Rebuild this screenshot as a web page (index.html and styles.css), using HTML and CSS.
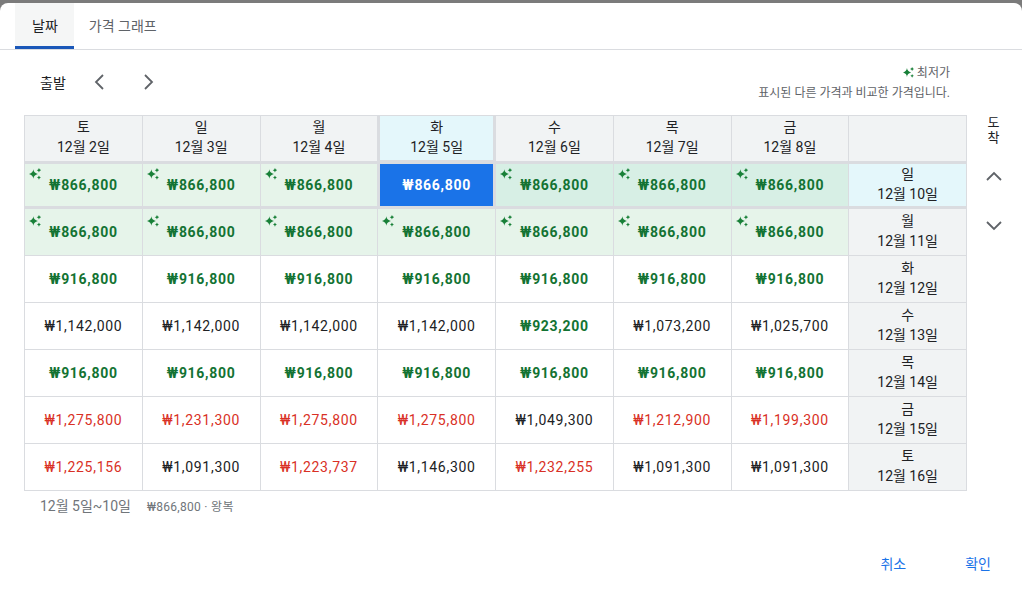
FILE: index.html
```html
<!DOCTYPE html>
<html lang="ko">
<head>
<meta charset="utf-8">
<link rel="stylesheet" href="styles.css">
</head>
<body>
<svg width="0" height="0" class="defs">
  <defs>
    <symbol id="spark" viewBox="0 0 10 10">
      <path d="M3.6 1 Q3.9 4.1 7.4 5 Q3.9 5.9 3.6 9 Q3.3 5.9 -0.2 5 Q3.3 4.1 3.6 1Z"/>
      <path d="M8.3 -0.1 Q8.5 1.4 10.2 1.8 Q8.5 2.2 8.3 3.7 Q8.1 2.2 6.4 1.8 Q8.1 1.4 8.3 -0.1Z"/>
      <path d="M8.3 6.3 Q8.5 7.6 9.9 8 Q8.5 8.4 8.3 9.7 Q8.1 8.4 6.7 8 Q8.1 7.6 8.3 6.3Z"/>
    </symbol>
  </defs>
</svg>
<div class="dialog">
  <div class="tabs">
    <div class="tab active">날짜</div>
    <div class="tab">가격 그래프</div>
  </div>
  <div class="content">
    <div class="toprow">
      <div class="depart">
        <span class="label">출발</span>
        <span class="chev"><svg viewBox="0 0 24 24"><path d="M15 5 L8 12 L15 19" /></svg></span>
        <span class="chev"><svg viewBox="0 0 24 24"><path d="M9 5 L16 12 L9 19" /></svg></span>
      </div>
      <div class="legend">
        <div class="legend-1"><svg class="spark-sm"><use href="#spark"/></svg> 최저가</div>
        <div class="legend-2">표시된 다른 가격과 비교한 가격입니다.</div>
      </div>
    </div>
    <div class="tablerow">
      <div class="grid">
        <div class="cell head"><span>토</span><span>12월 2일</span></div>
        <div class="cell head"><span>일</span><span>12월 3일</span></div>
        <div class="cell head"><span>월</span><span>12월 4일</span></div>
        <div class="cell head selhead"><span>화</span><span>12월 5일</span></div>
        <div class="cell head"><span>수</span><span>12월 6일</span></div>
        <div class="cell head"><span>목</span><span>12월 7일</span></div>
        <div class="cell head"><span>금</span><span>12월 8일</span></div>
        <div class="cell head"></div>

        <div class="cell low selrow"><svg class="spark"><use href="#spark"/></svg>₩866,800</div>
        <div class="cell low selrow"><svg class="spark"><use href="#spark"/></svg>₩866,800</div>
        <div class="cell low selrow"><svg class="spark"><use href="#spark"/></svg>₩866,800</div>
        <div class="cell selected">₩866,800</div>
        <div class="cell low selrow range"><svg class="spark"><use href="#spark"/></svg>₩866,800</div>
        <div class="cell low selrow range"><svg class="spark"><use href="#spark"/></svg>₩866,800</div>
        <div class="cell low selrow range"><svg class="spark"><use href="#spark"/></svg>₩866,800</div>
        <div class="cell side selrow selside"><span>일</span><span>12월 10일</span></div>

        <div class="cell low"><svg class="spark"><use href="#spark"/></svg>₩866,800</div>
        <div class="cell low"><svg class="spark"><use href="#spark"/></svg>₩866,800</div>
        <div class="cell low"><svg class="spark"><use href="#spark"/></svg>₩866,800</div>
        <div class="cell low"><svg class="spark"><use href="#spark"/></svg>₩866,800</div>
        <div class="cell low"><svg class="spark"><use href="#spark"/></svg>₩866,800</div>
        <div class="cell low"><svg class="spark"><use href="#spark"/></svg>₩866,800</div>
        <div class="cell low"><svg class="spark"><use href="#spark"/></svg>₩866,800</div>
        <div class="cell side"><span>월</span><span>12월 11일</span></div>

        <div class="cell green">₩916,800</div>
        <div class="cell green">₩916,800</div>
        <div class="cell green">₩916,800</div>
        <div class="cell green">₩916,800</div>
        <div class="cell green">₩916,800</div>
        <div class="cell green">₩916,800</div>
        <div class="cell green">₩916,800</div>
        <div class="cell side"><span>화</span><span>12월 12일</span></div>

        <div class="cell">₩1,142,000</div>
        <div class="cell">₩1,142,000</div>
        <div class="cell">₩1,142,000</div>
        <div class="cell">₩1,142,000</div>
        <div class="cell green">₩923,200</div>
        <div class="cell">₩1,073,200</div>
        <div class="cell">₩1,025,700</div>
        <div class="cell side"><span>수</span><span>12월 13일</span></div>

        <div class="cell green">₩916,800</div>
        <div class="cell green">₩916,800</div>
        <div class="cell green">₩916,800</div>
        <div class="cell green">₩916,800</div>
        <div class="cell green">₩916,800</div>
        <div class="cell green">₩916,800</div>
        <div class="cell green">₩916,800</div>
        <div class="cell side"><span>목</span><span>12월 14일</span></div>

        <div class="cell red">₩1,275,800</div>
        <div class="cell red">₩1,231,300</div>
        <div class="cell red">₩1,275,800</div>
        <div class="cell red">₩1,275,800</div>
        <div class="cell">₩1,049,300</div>
        <div class="cell red">₩1,212,900</div>
        <div class="cell red">₩1,199,300</div>
        <div class="cell side"><span>금</span><span>12월 15일</span></div>

        <div class="cell red">₩1,225,156</div>
        <div class="cell">₩1,091,300</div>
        <div class="cell red">₩1,223,737</div>
        <div class="cell">₩1,146,300</div>
        <div class="cell red">₩1,232,255</div>
        <div class="cell">₩1,091,300</div>
        <div class="cell">₩1,091,300</div>
        <div class="cell side"><span>토</span><span>12월 16일</span></div>
      </div>
      <div class="arrive">
        <div class="arrive-label">도<br>착</div>
        <span class="chev v"><svg viewBox="0 0 24 24"><path d="M5 15 L12 8 L19 15" /></svg></span>
        <span class="chev v"><svg viewBox="0 0 24 24"><path d="M5 9 L12 16 L19 9" /></svg></span>
      </div>
    </div>
    <div class="summary">
      <span class="sum-dates">12월 5일~10일</span>
      <span class="sum-price">₩866,800 · 왕복</span>
    </div>
    <div class="actions">
      <button class="btn">취소</button>
      <button class="btn">확인</button>
    </div>
  </div>
</div>
</body>
</html>
```
FILE: styles.css
```css
* { box-sizing: border-box; }
html, body { margin: 0; padding: 0; }
body {
  background: #7b7b7b;
  font-family: Roboto, "Noto Sans CJK KR", "Noto Sans", sans-serif;
  color: #202124;
  width: 1022px;
  height: 591px;
  overflow: hidden;
}
.defs { position: absolute; }
.dialog {
  margin-top: 3px;
  height: 588px;
  background: #fff;
  border-radius: 8px 8px 0 0;
}
.tabs {
  display: flex;
  padding-left: 15px;
  height: 47px;
  border-bottom: 1px solid #dadce0;
}
.tab {
  height: 46px;
  padding: 0 15px;
  font-size: 14px;
  line-height: 47px;
  color: #5f6368;
}
.tab.active {
  background: #f5f6f6;
  color: #202124;
  padding: 0 16px 0 17px;
  border-bottom: 3px solid #1a57b8;
}
.content { padding: 0 0 0 24px; }
.toprow {
  display: flex;
  justify-content: space-between;
  height: 65px;
  padding-right: 72px;
}
.depart {
  display: flex;
  align-items: center;
  padding-left: 16px;
  padding-bottom: 2px;
  height: 65px;
}
.label { font-size: 14px; color: #202124; margin-right: 22px; }
.chev {
  display: inline-flex;
  width: 24px;
  height: 24px;
  margin-right: 24px;
}
.chev svg {
  width: 24px;
  height: 24px;
  fill: none;
  stroke: #5f6368;
  stroke-width: 1.8;
}
.legend {
  text-align: right;
  font-size: 12px;
  color: #5f6368;
  padding-top: 14px;
}
.legend-1 { line-height: 18px; }
.legend-2 { line-height: 18px; margin-top: 2px; }
.spark-sm { width: 11px; height: 11px; fill: #188038; vertical-align: -1px; overflow: visible; }
.tablerow { display: flex; }
.grid {
  display: grid;
  grid-template-columns: repeat(8, 1fr);
  grid-template-rows: 45px repeat(7, 46px);
  gap: 1px;
  padding: 1px;
  background: #dadce0;
  width: 943px;
  flex: none;
}
.cell {
  position: relative;
  background: #fff;
  display: flex;
  align-items: center;
  justify-content: center;
  font-size: 14px;
  letter-spacing: 0.7px;
}
.head, .side {
  background: #f1f3f4;
  flex-direction: column;
  line-height: 20px;
  letter-spacing: 0;
}
.head { padding-bottom: 4px; }
.side { padding-bottom: 3px; }
.selhead, .selside { background: #e4f7fb; }
.selhead { box-shadow: inset 2px 0 0 #dadce0, inset -2px 0 0 #dadce0, inset 0 -1px 0 #dadce0; }
.selrow { box-shadow: inset 0 2px 0 #dadce0, inset 0 -2px 0 #dadce0; }
.low { background: #e6f4ea; color: #137333; font-weight: 700; }
.low.range { background: #d7efe5; }
.green { color: #137333; font-weight: 700; }
.red { color: #d93025; }
.selected {
  background: #1a73e8;
  color: #fff;
  font-weight: 700;
  box-shadow: inset 2px 2px 0 #dadce0, inset -2px -2px 0 #dadce0;
}
.spark {
  position: absolute;
  left: 4px;
  top: 6px;
  width: 12px;
  height: 12px;
  fill: #188038;
  overflow: visible;
}
.arrive {
  width: 53px;
  display: flex;
  flex-direction: column;
  align-items: center;
  padding-top: 0;
}
.arrive-label {
  font-size: 13px;
  line-height: 15px;
  text-align: center;
  color: #202124;
  height: 50px;
}
.chev.v { margin: 0 0 24px 0; }
.summary {
  padding: 4px 0 0 16px;
  height: 40px;
  color: #70757a;
}
.sum-dates { font-size: 14px; margin-right: 12px; }
.sum-price { font-size: 12px; letter-spacing: 0.3px; }
.actions {
  display: flex;
  justify-content: flex-end;
  padding-right: 17px;
  padding-top: 14px;
  gap: 31px;
}
.btn {
  background: none;
  border: 0;
  font-family: inherit;
  font-size: 14px;
  color: #1a73e8;
  padding: 8px 14px;
  cursor: pointer;
}
```
